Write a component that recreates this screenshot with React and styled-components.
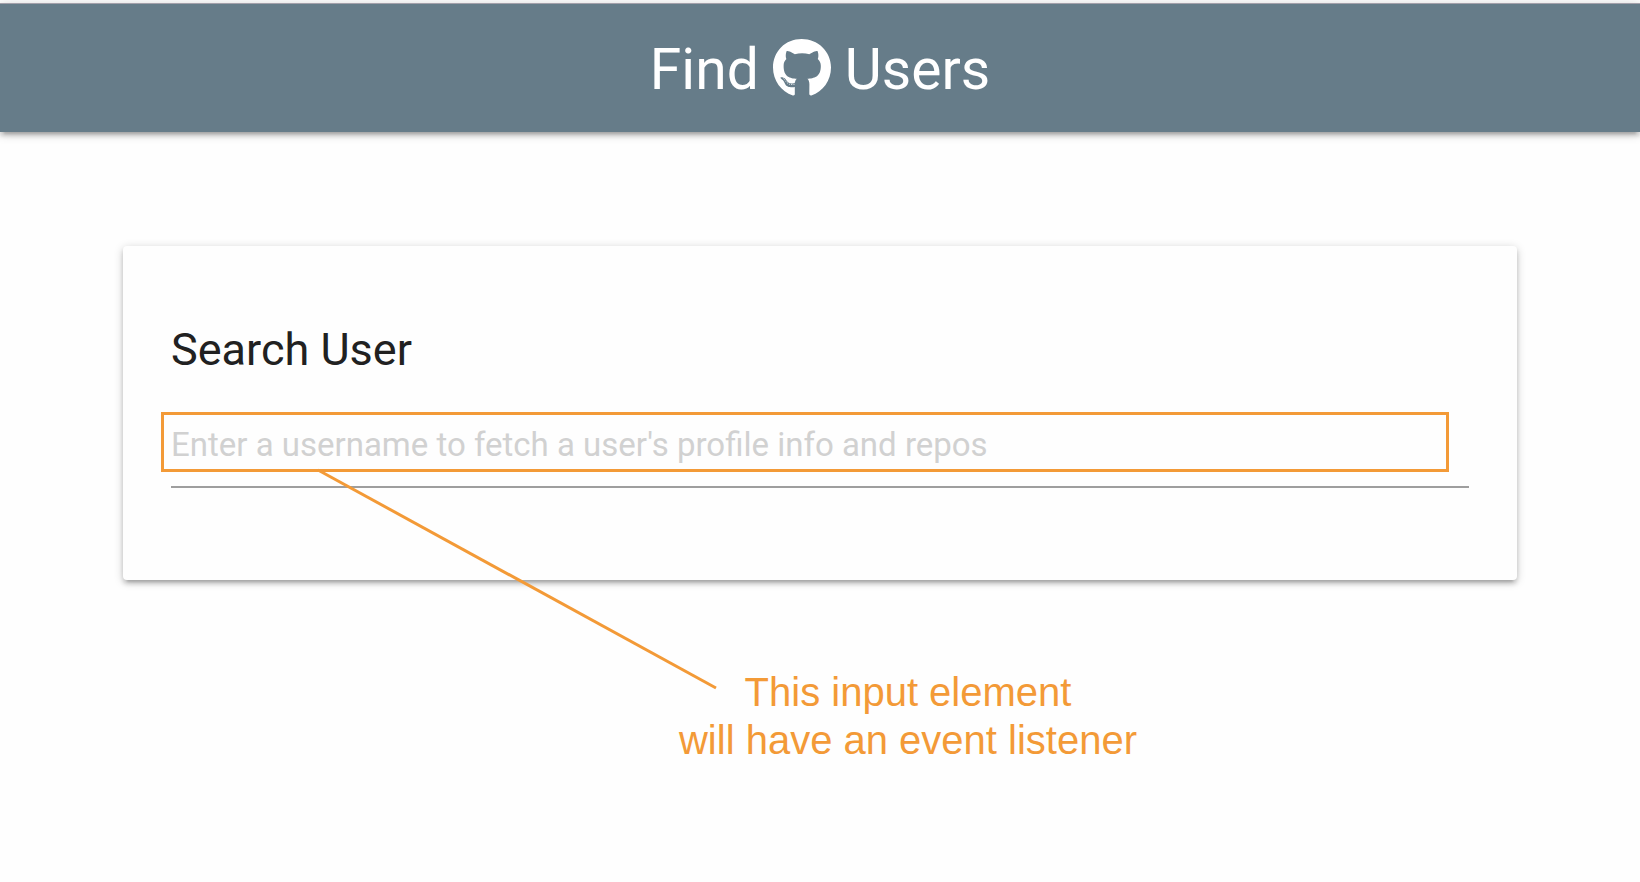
import React from "react";
import styled, { createGlobalStyle } from "styled-components";
import { FaGithub } from "react-icons/fa";

const shadow =
  "0 4px 4px 0 rgba(0,0,0,.14), 0 6px 2px -4px rgba(0,0,0,.12), 0 2px 10px 0 rgba(0,0,0,.2)";
const orange = "#f39a37";

const GlobalStyle = createGlobalStyle`
  *, *::before, *::after { box-sizing: border-box; }
  body {
    margin: 0;
    background: #fefefe;
    font-family: Roboto, "Liberation Sans", sans-serif;
    color: #212121;
  }
`;

const Page = styled.div`
  padding-top: 3px;
`;

const NavBar = styled.header`
  display: flex;
  justify-content: center;
  height: 129px;
  border-top: 1px solid #a3a0aa;
  background: #667c89;
  box-shadow: ${shadow};
`;

const Brand = styled.h1`
  display: flex;
  align-items: center;
  gap: 14px;
  margin: 0;
  height: 128px;
  font-size: 57px;
  line-height: 64px;
  font-weight: 400;
  color: #fff;
`;

const BrandWord = styled.span`
  padding-top: 4px;
`;

const BrandIcon = styled(FaGithub)`
  width: 58px;
  height: 60px;
`;

const Container = styled.main`
  width: 85%;
  margin: 114px auto 0;
`;

const Card = styled.section`
  padding: 80px 48px 92px;
  border-radius: 4px;
  background: #fefefe;
  box-shadow: ${shadow};
`;

const CardTitle = styled.label`
  display: block;
  font-size: 45px;
  line-height: 48px;
`;

const Field = styled.div`
  position: relative;
  margin-top: 28px;
`;

const SearchInput = styled.input`
  display: block;
  width: 100%;
  height: 86px;
  padding: 0;
  border: 0;
  border-bottom: 2px solid #9e9e9e;
  background: transparent;
  outline: none;
  font: 400 33px Roboto, "Liberation Sans", sans-serif;
  color: #212121;
  &::placeholder { color: #d1d1d1; opacity: 1; }
`;

const Highlight = styled.div`
  position: absolute;
  top: 10px;
  left: -10px;
  right: 20px;
  height: 60px;
  border: 3px solid ${orange};
  pointer-events: none;
`;

const Pointer = styled.svg`
  position: absolute;
  top: 100%;
  left: 150px;
  overflow: visible;
`;

const Callout = styled.p`
  margin: 88px 0 0;
  padding-left: 176px;
  font-family: "Liberation Sans", sans-serif;
  font-size: 40px;
  line-height: 48px;
  text-align: center;
  color: ${orange};
`;

export default function App() {
  return (
    <Page>
      <GlobalStyle />
      <NavBar>
        <Brand>
          <BrandWord>Find</BrandWord>
          <BrandIcon aria-label="GitHub" />
          <BrandWord>Users</BrandWord>
        </Brand>
      </NavBar>
      <Container>
        <Card>
          <CardTitle htmlFor="username">Search User</CardTitle>
          <Field>
            <SearchInput
              id="username"
              type="text"
              placeholder="Enter a username to fetch a user's profile info and repos"
            />
            <Highlight>
              <Pointer width="402" height="220" aria-hidden="true">
                <path d="M4 1 L402 219" fill="none" stroke={orange} strokeWidth="3" />
              </Pointer>
            </Highlight>
          </Field>
        </Card>
        <Callout>
          This input element
          <br />
          will have an event listener
        </Callout>
      </Container>
    </Page>
  );
}
